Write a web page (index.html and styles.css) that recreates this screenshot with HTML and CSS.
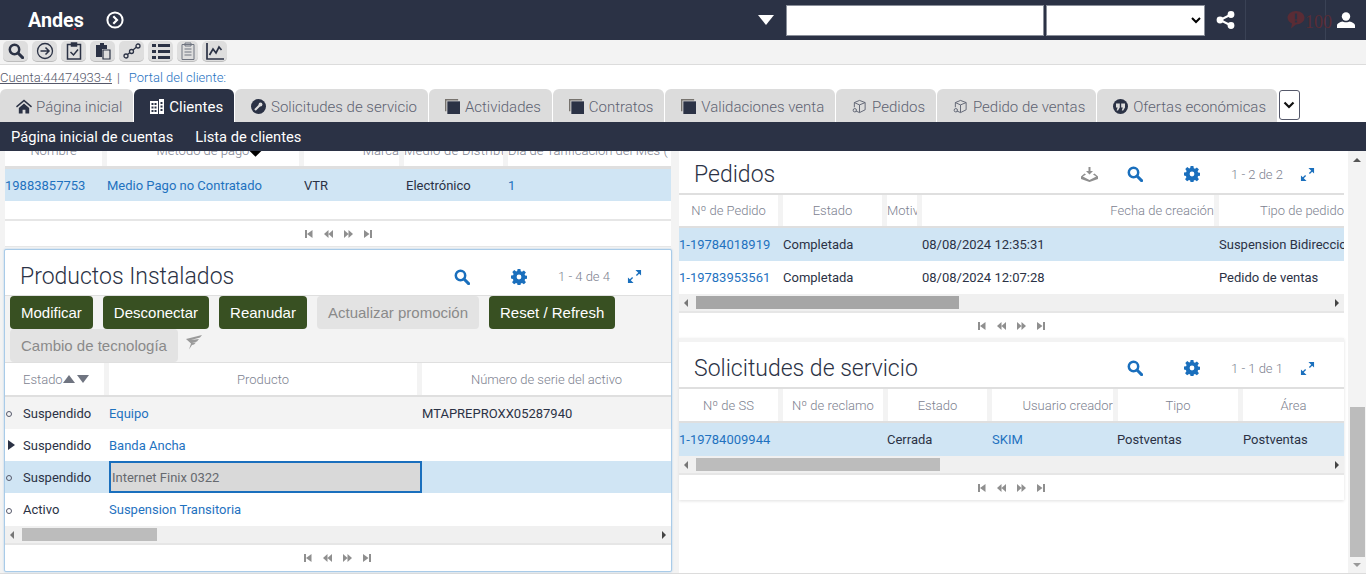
FILE: index.html
```html
<!DOCTYPE html>
<html lang="en">
<head>
  <meta charset="UTF-8" />
  <title>Andes - Clientes</title>
  <link rel="stylesheet" href="styles.css">
</head>
<body>
  <svg class="defs" width="0" height="0">
    <symbol id="i-search" viewBox="0 0 16 16"><circle cx="6.500" cy="6.500" r="4.700" fill="none" stroke="currentColor" stroke-width="2.500"/><path d="M10 10l4.600 4.600" stroke="currentColor" stroke-width="3" stroke-linecap="round"/></symbol>
    <symbol id="i-gear" viewBox="0 0 16 16"><path fill="currentColor" fill-rule="evenodd" d="M6.600 0h2.800l.4 2.200 1.200.5L12.900 1.400l2 2-1.300 1.900.5 1.200 2.200.4v2.800l-2.200.4-.5 1.200 1.300 1.900-2 2-1.900-1.300-1.200.5-.4 2.200H6.600l-.4-2.200-1.200-.5-1.900 1.300-2-2 1.300-1.900-.5-1.200L-.1 9.400V6.600l2.200-.4.5-1.200L1.300 3.100l2-2 1.900 1.300 1-.5zM8 5.600a2.400 2.400 0 1 0 0 4.800 2.400 2.400 0 0 0 0-4.800z"/></symbol>
    <symbol id="i-expand" viewBox="0 0 16 16"><path fill="currentColor" d="M9 1h6v6l-2-2-2.500 2.500-1-1L12 4zM7 15H1V9l2 2 2.500-2.500 1 1L4 12z"/></symbol>
    <symbol id="i-first" viewBox="0 0 8 8"><path fill="currentColor" d="M0 0h2v8H0zM7.500 0v8L2 4z"/></symbol>
    <symbol id="i-prev" viewBox="0 0 9 8"><path fill="currentColor" d="M4.500 0v8L0 4zM9 0v8L4.500 4z"/></symbol>
    <symbol id="i-next" viewBox="0 0 9 8"><path fill="currentColor" d="M0 0v8l4.500-4zM4.500 0v8L9 4z"/></symbol>
    <symbol id="i-last" viewBox="0 0 8 8"><path fill="currentColor" d="M6 0h2v8H6zM0 0v8l5.500-4z"/></symbol>
    <symbol id="i-cube" viewBox="0 0 16 16"><path fill="none" stroke="currentColor" d="M8 1.500l6 2.300v7.700l-6 3-4-1.800M8 1.500L2.500 3.800v5M2.500 3.800L8 6.300l6-2.500M8 6.300v8"/><circle cx="3" cy="12" r="1.800" fill="none" stroke="currentColor"/></symbol>
    <symbol id="i-stack" viewBox="0 0 16 16"><path fill="#77736e" d="M0 0h14v1.500H1.500V13H0z"/><path fill="#2b3245" d="M2.500 2.500H16V16H2.500z"/></symbol>
  </svg>

  <header class="topbar">
    <div class="brand">Andes<i class="brand-dot"></i></div>
    <svg class="brand-go" width="18" height="18" viewBox="0 0 18 18"><circle cx="9" cy="9" r="7.600" fill="none" stroke="#fff" stroke-width="2"/><path d="M7.300 5.200L11 9l-3.700 3.800" fill="none" stroke="#fff" stroke-width="2.200"/></svg>
    <div class="topbar-right">
      <svg class="drop" width="16" height="10" viewBox="0 0 16 10"><path fill="#fff" d="M0 0h16L8 10z"/></svg>
      <input class="top-input" type="text" />
      <select class="top-select"><option></option></select>
      <svg class="share" width="19" height="18" viewBox="0 0 19 18"><path d="M15 3.500L4 9l11 5.500" fill="none" stroke="#fff" stroke-width="2"/><circle cx="15" cy="3.500" r="3.400" fill="#fff"/><circle cx="4" cy="9" r="3.400" fill="#fff"/><circle cx="15" cy="14.500" r="3.400" fill="#fff"/></svg>
      <div class="alert">
        <svg width="18" height="18" viewBox="0 0 18 18"><path fill="#5a2c35" d="M9 0c4.700 0 8.500 3 8.500 6.800S13.700 13.500 9 13.500l-5 4 1-5C2.500 11.500.5 9.300.5 6.800.5 3 4.300 0 9 0z"/><path stroke="#2b3245" stroke-width="2.200" d="M9 2.500v6M9 9.500v2"/></svg>
        <span class="alert-num">100</span>
      </div>
      <svg class="user" width="18" height="16" viewBox="0 0 18 16"><circle cx="9" cy="4.500" r="4.200" fill="#fff"/><path fill="#fff" d="M0 16v-2.500c0-2 3-3.500 5.500-4 1 1 6 1 7 0 2.500.5 5.500 2 5.500 4V16z"/></svg>
    </div>
  </header>

  <div class="toolbar">
    <button class="tool"><svg class="ic-dark" width="16" height="16"><use href="#i-search"/></svg></button>
    <button class="tool"><svg width="18" height="18" viewBox="0 0 18 18" fill="none" stroke="#2b3245"><circle cx="9" cy="9" r="7.500" stroke-width="1.300"/><path d="M4.500 9h8M9.500 5.500L13 9l-3.500 3.500" stroke-width="1.500"/></svg></button>
    <button class="tool"><svg width="16" height="18" viewBox="0 0 16 18" fill="none" stroke="#2b3245" stroke-width="1.500"><path d="M5 2.500H1.500v14.500h13V2.500H11"/><path fill="#2b3245" d="M5.500 1h5v3h-5z"/><path d="M4.500 10l3 3 4.500-5.500"/></svg></button>
    <button class="tool"><svg width="16" height="17" viewBox="0 0 16 17"><path fill="#2b3245" d="M1 2h4V0h4v2h3v4H7v8H1z"/><path fill="none" stroke="#2b3245" stroke-width="1.200" d="M8 7h7v9H8z"/></svg></button>
    <button class="tool"><svg width="18" height="16" viewBox="0 0 18 16" fill="none" stroke="#2b3245" stroke-width="1.300"><circle cx="3" cy="13" r="2"/><circle cx="8.500" cy="8.500" r="2"/><circle cx="15" cy="3" r="2"/><path d="M4.500 11.500l2.500-2M10 7l3.500-3"/></svg></button>
    <button class="tool"><svg width="18" height="15" viewBox="0 0 18 15" fill="#2b3245"><path d="M0 0h4v3H0zM6 0h12v3H6zM0 6h4v3H0zM6 6h12v3H6zM0 12h4v3H0zM6 12h12v3H6z"/></svg></button>
    <button class="tool tool-sm"><svg width="14" height="18" viewBox="0 0 14 18" fill="none" stroke="#6f7480"><path d="M1 2.500h12v15H1zM4 1h6v3H4zM3.500 7h7M3.500 10h7M3.500 13h7"/></svg></button>
    <button class="tool"><svg width="18" height="17" viewBox="0 0 18 17" fill="none" stroke="#2b3245" stroke-width="1.700"><path d="M1 0v16h17"/><path d="M3.500 12l3.500-6 3 4 3-6 2.500 3"/></svg></button>
  </div>

  <div class="linkrow">
    <a class="acct">Cuenta:44474933-4</a>
    <span class="sep">|</span>
    <a class="portal">Portal del cliente:</a>
  </div>

  <nav class="tabs">
    <a class="tab tab-first"><svg width="16" height="15" viewBox="0 0 17 15"><path fill="#2b3245" d="M8.500 0L17 7.300l-1 1.200-7.500-6.300L1 8.500 0 7.300zM3 9l5.500-4.700L14 9v6h-4v-4H7v4H3z"/></svg>Página inicial</a>
    <a class="tab tab-active"><svg width="14" height="15" viewBox="0 0 14 15"><path fill="#fff" fill-rule="evenodd" d="M0 2h8v13H0zM9 0h5v15H9zM1.500 4v2h2V4zm3 0v2h2V4zm-3 3.500v2h2v-2zm3 0v2h2v-2zm-3 3.500v2h2v-2zm3 0v2h2v-2zM10.500 3v2h2V3zm0 3.500v2h2v-2zm0 3.500v2h2v-2z"/></svg>Clientes</a>
    <a class="tab"><svg width="15" height="15" viewBox="0 0 15 15"><circle cx="7.500" cy="7.500" r="7.500" fill="#2b3245"/><path d="M4 11l4.500-4.500" stroke="#ddd" stroke-width="2.200"/><circle cx="9.500" cy="5.500" r="1.900" fill="#ddd"/></svg>Solicitudes de servicio</a>
    <a class="tab"><svg width="15" height="15"><use href="#i-stack"/></svg>Actividades</a>
    <a class="tab"><svg width="15" height="15"><use href="#i-stack"/></svg>Contratos</a>
    <a class="tab"><svg width="15" height="15"><use href="#i-stack"/></svg>Validaciones venta</a>
    <a class="tab"><svg class="cube" width="15" height="15"><use href="#i-cube"/></svg>Pedidos</a>
    <a class="tab"><svg class="cube" width="15" height="15"><use href="#i-cube"/></svg>Pedido de ventas</a>
    <a class="tab"><svg width="15" height="15" viewBox="0 0 15 15"><circle cx="7.500" cy="7.500" r="7.500" fill="#2b3245"/><path fill="#ddd" d="M3 4.500h3.800v4L5 11.500H3.600l1-3H3zM8.200 4.500H12v4l-1.800 3H8.800l1-3H8.200z"/></svg>Ofertas económicas</a>
    <button class="tab-more"><svg width="12" height="8" viewBox="0 0 12 8"><path d="M1.500 1.500L6 6l4.500-4.500" fill="none" stroke="#111" stroke-width="2.200"/></svg></button>
  </nav>

  <div class="subnav">
    <a>Página inicial de cuentas</a>
    <a>Lista de clientes</a>
  </div>

  <main class="content">
    <div class="col col-left">
      <section class="panel panel-top">
        <div class="clip">
          <div class="thead cols-top">
            <div class="th">Nombre</div>
            <div class="th th-sort">Método de pago<i class="sort-mark"></i></div>
            <div class="th th-right">Marca</div>
            <div class="th th-tight th-wide">Medio de Distribt</div>
            <div class="th th-tight">Día de Tarificación del Mes (</div>
          </div>
        </div>
        <div class="row cols-top row-sel">
          <div class="td link">19883857753</div>
          <div class="td link">Medio Pago no Contratado</div>
          <div class="td">VTR</div>
          <div class="td">Electrónico</div>
          <div class="td link">1</div>
        </div>
        <div class="blank"></div>
        <div class="pager">
          <svg width="8" height="8"><use href="#i-first"/></svg><svg width="9" height="8"><use href="#i-prev"/></svg><svg width="9" height="8"><use href="#i-next"/></svg><svg width="8" height="8"><use href="#i-last"/></svg>
        </div>
      </section>

      <section class="panel panel-products">
        <div class="card-head card-head-prod">
          <h2>Productos Instalados</h2>
          <div class="card-tools">
            <svg class="ic-search" width="16" height="16"><use href="#i-search"/></svg>
            <svg class="ic-gear" width="16" height="16"><use href="#i-gear"/></svg>
            <span class="count">1 - 4 de 4</span>
            <svg class="ic-expand" width="15" height="15"><use href="#i-expand"/></svg>
          </div>
        </div>
        <div class="actions">
          <button class="btn">Modificar</button>
          <button class="btn">Desconectar</button>
          <button class="btn">Reanudar</button>
          <button class="btn btn-off">Actualizar promoción</button>
          <button class="btn">Reset / Refresh</button>
          <button class="btn btn-off">Cambio de tecnología</button>
          <svg class="pin" width="17" height="15" viewBox="0 0 17 15"><path fill="#9a9a9a" d="M0 4L16 0l-2 2.500-9 2.500 8-1-2 2.500-5 1.500 4-.5-2 2-2 .5-3 4.500 2-6z"/></svg>
        </div>
        <div class="thead cols-prod">
          <div class="th th-estado">Estado<svg width="26" height="8" viewBox="0 0 26 8"><path fill="#6f7480" d="M0 8l6-8 6 8zM14 0h12l-6 8z"/></svg></div>
          <div class="th">Producto</div>
          <div class="th">Número de serie del activo</div>
        </div>
        <div class="row cols-prod row-alt">
          <div class="td"><i class="dot"></i>Suspendido</div>
          <div class="td link">Equipo</div>
          <div class="td">MTAPREPROXX05287940</div>
        </div>
        <div class="row cols-prod">
          <div class="td"><i class="tri"></i>Suspendido</div>
          <div class="td link">Banda Ancha</div>
          <div class="td"></div>
        </div>
        <div class="row cols-prod row-sel">
          <div class="td"><i class="dot"></i>Suspendido</div>
          <div class="td td-active">Internet Finix 0322</div>
          <div class="td"></div>
        </div>
        <div class="row cols-prod row-last">
          <div class="td"><i class="dot"></i>Activo</div>
          <div class="td link">Suspension Transitoria</div>
          <div class="td"></div>
        </div>
        <div class="hscroll">
          <i class="arrow-l"></i>
          <div class="thumb thumb-prod"></div>
          <i class="arrow-r"></i>
        </div>
        <div class="pager pager-prod">
          <svg width="8" height="8"><use href="#i-first"/></svg><svg width="9" height="8"><use href="#i-prev"/></svg><svg width="9" height="8"><use href="#i-next"/></svg><svg width="8" height="8"><use href="#i-last"/></svg>
        </div>
      </section>
    </div>

    <div class="col col-right">
      <section class="panel panel-orders">
        <div class="card-head card-head-orders">
          <h2>Pedidos</h2>
          <div class="card-tools">
            <svg class="ic-down" width="17" height="15" viewBox="0 0 17 15"><path fill="#8f8f8f" d="M7.500 0h2v4H12L8.500 7.500 5 4h2.500zM3.500 6.500L5 7.500 1.800 9.500l6.700 3.500 6.700-3.500L12 7.500l1.500-1L17 9.500V12l-8.500 3L0 12V9.500z"/></svg>
            <svg class="ic-search ic-search-b" width="16" height="16"><use href="#i-search"/></svg>
            <svg class="ic-gear" width="16" height="16"><use href="#i-gear"/></svg>
            <span class="count">1 - 2 de 2</span>
            <svg class="ic-expand" width="15" height="15"><use href="#i-expand"/></svg>
          </div>
        </div>
        <div class="thead thead-short cols-orders">
          <div class="th">Nº de Pedido</div>
          <div class="th">Estado</div>
          <div class="th th-tight">Motivo</div>
          <div class="th th-right">Fecha de creación</div>
          <div class="th th-right">Tipo de pedido</div>
        </div>
        <div class="row row-tall cols-orders row-sel">
          <div class="td link">1-19784018919</div>
          <div class="td">Completada</div>
          <div class="td"></div>
          <div class="td">08/08/2024 12:35:31</div>
          <div class="td">Suspension Bidireccional</div>
        </div>
        <div class="row row-tall cols-orders">
          <div class="td link">1-19783953561</div>
          <div class="td">Completada</div>
          <div class="td"></div>
          <div class="td">08/08/2024 12:07:28</div>
          <div class="td">Pedido de ventas</div>
        </div>
        <div class="hscroll">
          <i class="arrow-l"></i>
          <div class="thumb thumb-orders"></div>
          <i class="arrow-r"></i>
        </div>
        <div class="pager">
          <svg width="8" height="8"><use href="#i-first"/></svg><svg width="9" height="8"><use href="#i-prev"/></svg><svg width="9" height="8"><use href="#i-next"/></svg><svg width="8" height="8"><use href="#i-last"/></svg>
        </div>
      </section>

      <section class="panel panel-requests">
        <div class="card-head card-head-req">
          <h2>Solicitudes de servicio</h2>
          <div class="card-tools">
            <svg class="ic-search" width="16" height="16"><use href="#i-search"/></svg>
            <svg class="ic-gear" width="16" height="16"><use href="#i-gear"/></svg>
            <span class="count">1 - 1 de 1</span>
            <svg class="ic-expand" width="15" height="15"><use href="#i-expand"/></svg>
          </div>
        </div>
        <div class="thead cols-req">
          <div class="th">Nº de SS</div>
          <div class="th">Nº de reclamo</div>
          <div class="th">Estado</div>
          <div class="th th-right">Usuario creador</div>
          <div class="th">Tipo</div>
          <div class="th">Área</div>
        </div>
        <div class="row row-tall cols-req row-sel">
          <div class="td link">1-19784009944</div>
          <div class="td"></div>
          <div class="td">Cerrada</div>
          <div class="td link">SKIM</div>
          <div class="td">Postventas</div>
          <div class="td">Postventas</div>
        </div>
        <div class="hscroll">
          <i class="arrow-l"></i>
          <div class="thumb thumb-req"></div>
          <i class="arrow-r"></i>
        </div>
        <div class="pager">
          <svg width="8" height="8"><use href="#i-first"/></svg><svg width="9" height="8"><use href="#i-prev"/></svg><svg width="9" height="8"><use href="#i-next"/></svg><svg width="8" height="8"><use href="#i-last"/></svg>
        </div>
      </section>
    </div>

    <div class="vscroll">
      <i class="arrow-u"></i>
      <div class="vthumb"></div>
      <i class="arrow-d"></i>
    </div>
  </main>
</body>
</html>
```

FILE: styles.css
```css
* {
  box-sizing: border-box;
}

html, body {
  height: 581px;
  overflow: hidden;
}

body {
  margin: 0;
  font-family: Roboto, sans-serif;
  font-size: 13px;
  color: #2b3245;
  background: #fff;
}

.defs {
  position: absolute;
}

svg {
  display: block;
  flex: none;
}

/* top bar */
.topbar {
  height: 40px;
  background: #2b3245;
  display: flex;
  align-items: center;
  padding-left: 28px;
}

.brand {
  position: relative;
  color: #fff;
  font-size: 19.7px;
  font-weight: 700;
  width: 78px;
}

.brand-dot {
  position: absolute;
  left: 46px;
  top: 19px;
  width: 2px;
  height: 2px;
  background: #c8202f;
}

.topbar-right {
  margin-left: auto;
  display: flex;
  align-items: center;
}

.drop {
  margin-right: 12px;
}

.top-input {
  width: 258px;
  height: 31px;
  border: 1px solid #8a8f9a;
  background: #fff;
  margin-right: 2px;
}

.top-select {
  width: 159px;
  height: 31px;
  border: 1px solid #8a8f9a;
  background: #fff;
  margin-right: 11px;
}

.share {
  margin-right: 10px;
}

.alert {
  flex: none;
  width: 81px;
  height: 40px;
  border-left: 1px solid #3a4255;
  border-right: 1px solid #3a4255;
  padding-left: 41px;
  display: flex;
  align-items: center;
}

.alert-num {
  font-family: "Liberation Serif", serif;
  font-size: 18px;
  color: #5a2c35;
  margin-top: 4px;
}

.user {
  margin: 0 11px;
}

/* icon toolbar */
.toolbar {
  height: 25px;
  background: #f3f3f3;
  border-bottom: 1px solid #dcdcdc;
  display: flex;
  gap: 4px;
  padding: 1px 0 0 3px;
}

.tool {
  width: 25px;
  height: 21px;
  padding: 0;
  border: 0;
  border-bottom: 1px solid #bdbdbd;
  border-radius: 5px;
  background: #dedede;
  display: flex;
  align-items: center;
  justify-content: center;
}

.tool-sm {
  width: 21px;
}

.ic-dark {
  color: #2b3245;
}

.linkrow {
  height: 24px;
  font-size: 13px;
  font-weight: 300;
  display: flex;
  align-items: center;
  padding-top: 1px;
}

.acct {
  text-decoration: underline;
  color: #55586a;
}

.sep {
  margin: 0 9px 0 5px;
  color: #55586a;
}

.portal {
  color: #1f72bf;
}

/* tabs */
.tabs {
  height: 33px;
  display: flex;
  align-items: stretch;
  gap: 1px;
}

.tab {
  display: flex;
  align-items: center;
  gap: 5px;
  padding: 2px 10.9px 0 16px;
  background: #dcdcdc;
  color: #5e6372;
  font-size: 15px;
  font-weight: 300;
  border-radius: 6px 6px 0 0;
  white-space: nowrap;
}

.tab-first {
  gap: 4px;
}

.tab-active {
  background: #2b3245;
  color: #fff;
  font-weight: 400;
}

.cube {
  color: #5e6372;
}

.tab-more {
  width: 21px;
  height: 30px;
  margin: 1px 0 0 1px;
  padding: 0;
  background: #fff;
  border: 1px solid #55586a;
  border-radius: 3px;
  display: flex;
  align-items: center;
  justify-content: center;
}

.subnav {
  height: 29px;
  background: #2b3245;
  color: #fff;
  display: flex;
  align-items: center;
  gap: 22px;
  padding-left: 11px;
  font-size: 14.7px;
}

/* content */
.content {
  height: 423px;
  display: flex;
  background: #f3f3f3;
  border-bottom: 1px solid #dcdcdc;
  padding-left: 5px;
}

.col {
  display: flex;
  flex-direction: column;
}

.col-left {
  width: 667px;
  margin-right: 7px;
}

.col-right {
  width: 669px;
  padding-right: 4px;
  background: #fff;
}

.panel {
  background: #fff;
}

.panel-top {
  height: 96px;
  margin: 0 1px 2px 0;
  border-bottom: 1px solid #e6e6e6;
}

.clip {
  height: 18px;
  overflow: hidden;
}

.clip .thead {
  margin-top: -16px;
  border-bottom-width: 3px;
}

.panel-products {
  height: 323px;
  border: 1px solid #a9cbe8;
  box-shadow: 0 0 2px #a9cbe8;
  border-radius: 2px;
  margin-left: -1px;
}

.panel-orders {
  height: 187px;
}

.panel-requests {
  border-top: 4px solid #f3f3f3;
  box-shadow: 0 1px 3px #e0e0e0;
}

.card-head {
  height: 46px;
  display: flex;
  align-items: center;
  justify-content: space-between;
  padding-left: 15px;
  border-bottom: 1px solid #dfdfdf;
}

.card-head-prod {
  padding-top: 8px;
}

.card-head-orders {
  height: 44px;
  padding-top: 4px;
  border-bottom-width: 2px;
}

.card-head-req {
  height: 47px;
  padding-top: 7px;
  border-bottom-width: 2px;
}

.card-head h2 {
  margin: 0;
  font-size: 23px;
  font-weight: 300;
  color: #2b3245;
}

.card-tools {
  display: flex;
  align-items: center;
  padding-right: 29px;
  color: #1a6fbd;
}

.ic-gear {
  margin-left: 41px;
}

.ic-search-b {
  margin-left: 29px;
}

.count {
  margin-left: 31px;
  width: 52px;
  font-size: 13px;
  font-weight: 300;
  color: #7d8290;
  white-space: nowrap;
}

.ic-expand {
  margin-left: 17px;
}

.actions {
  height: 67px;
  background: #f3f3f3;
  display: flex;
  flex-wrap: wrap;
  align-content: flex-start;
  align-items: flex-start;
  column-gap: 10px;
  padding-left: 5px;
  border-bottom: 1px solid #dfdfdf;
}

.btn {
  height: 33px;
  padding: 0 11px;
  border: 0;
  border-radius: 4px;
  background: #385022;
  color: #fff;
  font-family: "Liberation Sans", sans-serif;
  font-size: 15px;
}

.btn-off {
  background: #e3e3e3;
  color: #8a8a8a;
}

.pin {
  margin: 6px 0 0 -2px;
}

/* tables */
.thead,
.row {
  display: grid;
}

.thead {
  height: 34px;
  background: #f3f3f3;
  column-gap: 5px;
  border-bottom: 2px solid #dfdfdf;
}

.thead-short {
  height: 33px;
}

.th {
  background: #fff;
  display: flex;
  align-items: center;
  justify-content: center;
  color: #7d8290;
  font-weight: 300;
  white-space: nowrap;
  overflow: hidden;
  position: relative;
}

.th-right {
  justify-content: flex-end;
}

.th-tight {
  justify-content: flex-start;
}

.th-wide {
  letter-spacing: 0.25px;
}

.th-estado {
  justify-content: flex-start;
  padding-left: 18px;
}

.th-sort {
  overflow: visible;
}

.sort-mark {
  position: absolute;
  right: 39px;
  top: 11px;
  width: 9px;
  height: 9px;
  background: #000;
  transform: rotate(45deg);
}

.cols-top {
  grid-template-columns: 97px 192px 95px 99px 1fr;
}

.row.cols-top {
  grid-template-columns: 102px 197px 102px 102px 1fr;
}

.cols-prod {
  grid-template-columns: 99px 308px 1fr;
}

.row.cols-prod {
  grid-template-columns: 104px 313px 1fr;
}

.cols-orders {
  grid-template-columns: 99px 99px 30px 292px 1fr;
}

.row.cols-orders {
  grid-template-columns: 104px 104px 35px 297px 1fr;
}

.cols-req {
  grid-template-columns: 99px 100px 99px 121px 120px 1fr;
}

.row.cols-req {
  grid-template-columns: 104px 104px 105px 125px 126px 1fr;
}

.row {
  height: 32px;
  align-items: stretch;
}

.row-tall,
.row-last {
  height: 33px;
}

.row-alt {
  background: #f3f3f3;
}

.row-sel {
  background: #d0e5f4;
}

.td {
  display: flex;
  align-items: center;
  white-space: nowrap;
  overflow: hidden;
}

.link {
  color: #1f72bf;
}

.td-active {
  background: #d9d9d9;
  border: 2px solid #1a6fbd;
  color: #66696f;
  padding-left: 1px;
}

.dot {
  width: 6px;
  height: 6px;
  margin: 2px 11px 0 1px;
  border: 1px solid #55586a;
  border-radius: 50%;
  flex: none;
}

.tri {
  width: 0;
  height: 0;
  border-left: 7px solid #2b3245;
  border-top: 5px solid transparent;
  border-bottom: 5px solid transparent;
  margin: 0 8px 0 3px;
  flex: none;
}

.blank {
  height: 18px;
}

.hscroll {
  height: 17px;
  background: #f0f0f0;
  display: flex;
  align-items: center;
  padding: 0 5px;
}

.arrow-l {
  width: 0;
  height: 0;
  border-right: 4px solid #777;
  border-top: 4px solid transparent;
  border-bottom: 4px solid transparent;
  margin-right: 8px;
}

.arrow-r {
  width: 0;
  height: 0;
  margin-left: auto;
  border-left: 4px solid #444;
  border-top: 4px solid transparent;
  border-bottom: 4px solid transparent;
}

.thumb {
  height: 13px;
  background: #bcbcbc;
}

.thumb-prod {
  width: 135px;
}

.thumb-orders {
  width: 263px;
  background: #a6a6a6;
}

.thumb-req {
  width: 244px;
}

.pager {
  height: 27px;
  border-top: 2px solid #e6e6e6;
  display: flex;
  align-items: center;
  justify-content: center;
  gap: 11px;
  color: #8f8f8f;
}

.pager-prod {
  height: 28px;
  padding-right: 2px;
}

/* page scrollbar */
.vscroll {
  width: 18px;
  background: #f3f3f3;
  display: flex;
  flex-direction: column;
  align-items: center;
  padding-top: 7px;
}

.arrow-u {
  width: 0;
  height: 0;
  border-bottom: 4px solid #555;
  border-left: 4px solid transparent;
  border-right: 4px solid transparent;
}

.vthumb {
  width: 15px;
  height: 150px;
  background: #bcbcbc;
  margin-top: 245px;
}

.arrow-d {
  width: 0;
  height: 0;
  margin-top: 6px;
  border-top: 4px solid #999;
  border-left: 4px solid transparent;
  border-right: 4px solid transparent;
}
```
